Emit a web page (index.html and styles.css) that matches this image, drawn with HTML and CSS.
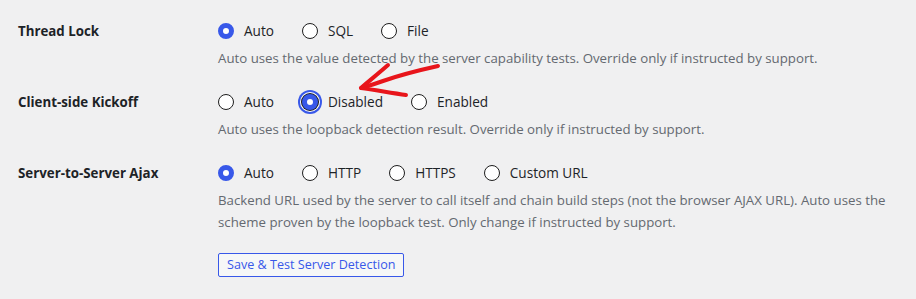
FILE: index.html
```html
<!DOCTYPE html>
<html>
<head>
<meta charset="utf-8">
<link rel="stylesheet" href="styles.css">
</head>
<body>
<div class="page">
  <div class="row">
    <div class="label">Thread Lock</div>
    <div class="field">
      <div class="options">
        <label class="opt"><span class="radio checked"></span>Auto</label>
        <label class="opt"><span class="radio"></span>SQL</label>
        <label class="opt"><span class="radio"></span>File</label>
      </div>
      <p class="desc">Auto uses the value detected by the server capability tests. Override only if instructed by support.</p>
    </div>
  </div>
  <div class="row">
    <div class="label">Client-side Kickoff</div>
    <div class="field">
      <div class="options">
        <label class="opt"><span class="radio"></span>Auto</label>
        <label class="opt"><span class="radio checked focus"></span>Disabled</label>
        <label class="opt"><span class="radio"></span>Enabled</label>
      </div>
      <p class="desc">Auto uses the loopback detection result. Override only if instructed by support.</p>
    </div>
  </div>
  <div class="row">
    <div class="label">Server-to-Server Ajax</div>
    <div class="field">
      <div class="options">
        <label class="opt"><span class="radio checked"></span>Auto</label>
        <label class="opt"><span class="radio"></span>HTTP</label>
        <label class="opt"><span class="radio"></span>HTTPS</label>
        <label class="opt"><span class="radio"></span>Custom URL</label>
      </div>
      <p class="desc">Backend URL used by the server to call itself and chain build steps (not the browser AJAX URL). Auto uses the scheme proven by the loopback test. Only change if instructed by support.</p>
      <button class="btn">Save &amp; Test Server Detection</button>
    </div>
  </div>
</div>
<svg class="arrow" width="916" height="299" viewBox="0 0 916 299">
  <path d="M438 66 C 420 70, 400 75, 383 81 C 375 84, 368 86, 361 88" fill="none" stroke="#e8151b" stroke-width="4" stroke-linecap="round"/>
  <path d="M388 65 C 379 73, 369 81, 361 88 C 375 90, 392 93, 406 95" fill="none" stroke="#e8151b" stroke-width="4" stroke-linecap="round" stroke-linejoin="round"/>
</svg>
</body>
</html>
```

FILE: styles.css
```css
html, body {
  margin: 0;
  padding: 0;
  background: #f0f0f1;
}
body {
  font-family: "Open Sans", "Noto Sans", sans-serif;
  color: #1d2327;
  width: 916px;
  height: 299px;
  overflow: hidden;
  position: relative;
}
.page {
  padding: 9px 0 0 18px;
}
.row {
  display: flex;
  padding: 11px 0;
}
.label {
  width: 200px;
  flex: none;
  font-size: 13.3px;
  font-weight: 700;
  line-height: 22px;
  color: #1d2327;
}
.field {
  flex: 1;
  padding-right: 20px;
}
.options {
  display: flex;
  gap: 28px;
  height: 22px;
  align-items: center;
}
.opt {
  display: flex;
  align-items: center;
  gap: 10px;
  font-size: 13.6px;
  line-height: 22px;
  color: #1d2327;
}
.radio {
  width: 16px;
  height: 16px;
  box-sizing: border-box;
  border-radius: 50%;
  border: 1px solid #1e1e1e;
  background: #fff;
  flex: none;
  position: relative;
}
.radio.checked {
  border: 5px solid #3858e9;
  background: #fff;
}
.radio.focus {
  border-color: #3858e9;
  box-shadow: 0 0 0 1px #1e1e1e, 0 0 0 2px #fff, 0 0 0 4px #3858e9;
}
.desc {
  margin: 5px 0 0;
  font-size: 13.25px;
  line-height: 22px;
  color: #646970;
}
.btn {
  margin-top: 20px;
  height: 24px;
  padding: 0 8px;
  font-family: inherit;
  font-size: 12.6px;
  line-height: 22px;
  color: #3858e9;
  background: #f6f7f7;
  border: 1px solid #3858e9;
  border-radius: 2px;
  cursor: pointer;
}
.arrow {
  position: absolute;
  left: 0;
  top: 0;
  pointer-events: none;
}
```
